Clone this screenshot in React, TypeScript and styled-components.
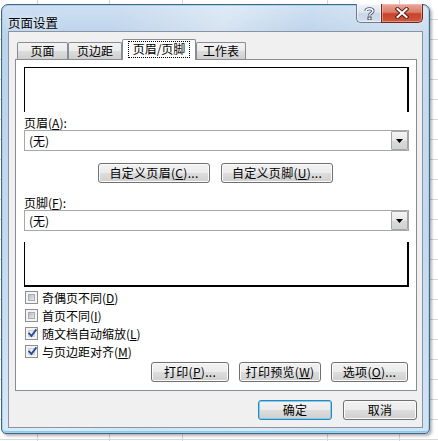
import React from 'react';
import styled, { createGlobalStyle, css } from 'styled-components';

const GlobalStyle = createGlobalStyle`
  html, body { margin: 0; padding: 0; }
  body {
    width: 438px;
    height: 441px;
    overflow: hidden;
    font-family: "Noto Sans CJK SC", "Liberation Sans", sans-serif;
    font-size: 12px;
    color: #000;
    background-color: #fff;
    background-image:
      repeating-linear-gradient(90deg, transparent 0 37px, #d5d8dd 37px 38px, transparent 38px 72.5px),
      repeating-linear-gradient(180deg, transparent 0 19px, #d5d8dd 19px 20px);
  }
`;

const Window = styled.div`
  box-sizing: border-box;
  margin: 4px 0 0 1px;
  width: 429px;
  height: 430px;
  display: flex;
  flex-direction: column;
  padding: 0 6px 5px 6px;
  border: 1px solid #4f6079;
  border-radius: 7px 7px 5px 5px;
  background:
    linear-gradient(112deg, transparent 20%, rgba(255,255,255,0.35) 38%, transparent 52%, rgba(255,255,255,0.25) 70%, transparent 85%),
    linear-gradient(180deg, #cfe0f2 0%, #bdd3ea 7%, #c6daef 55%, #d2e3f4 100%);
  box-shadow: inset 0 0 0 1px #9ad6f6, inset 0 -2px 0 #7fcdf3, 2px 2px 3px rgba(0, 0, 0, 0.3);
`;

const TitleBar = styled.div`
  height: 26px;
  display: flex;
  align-items: flex-start;
`;

const Title = styled.div`
  margin-top: 10px;
  font-size: 12.5px;
  line-height: 15px;
  color: #000;
  text-shadow: 0 0 6px rgba(255, 255, 255, 0.9);
`;

const CaptionButtons = styled.div`
  margin-left: auto;
  margin-top: -1px;
  display: flex;
`;

const CaptionButton = styled.div<{ $close?: boolean }>`
  box-sizing: border-box;
  height: 19px;
  width: ${(p) => (p.$close ? '42px' : '25px')};
  display: flex;
  align-items: center;
  justify-content: center;
  border: 1px solid ${(p) => (p.$close ? '#6a2a22' : '#6e7a8a')};
  border-top: none;
  ${(p) =>
    p.$close
      ? css`
          border-radius: 0 0 5px 0;
          background: linear-gradient(180deg, #e9a99b 0%, #dc7d6a 45%, #c6432b 55%, #cf5a3d 100%);
          box-shadow: inset 0 0 0 1px rgba(255, 200, 190, 0.5);
        `
      : css`
          border-right: none;
          border-radius: 0 0 0 5px;
          background: linear-gradient(180deg, #eef3f9 0%, #dde6f1 45%, #c9d6e6 55%, #d3dfee 100%);
          box-shadow: inset 0 0 0 1px rgba(255, 255, 255, 0.6);
        `}
`;

const Client = styled.div`
  box-sizing: border-box;
  width: 415px;
  height: 397px;
  border: 1px solid #8a93a1;
  background: #f0f0f0;
  padding: 7px 5px 0 6px;
  display: flex;
  flex-direction: column;
`;

const TabStrip = styled.div`
  height: 20px;
  padding-left: 2px;
  display: flex;
  align-items: flex-end;
`;

const Tab = styled.div<{ $w: number; $active?: boolean }>`
  box-sizing: border-box;
  width: ${(p) => p.$w}px;
  display: flex;
  justify-content: center;
  border: 1px solid #898c95;
  border-bottom: none;
  border-radius: 2px 2px 0 0;
  ${(p) =>
    p.$active
      ? css`
          height: 21px;
          margin-bottom: -1px;
          position: relative;
          z-index: 1;
          background: #fff;
          padding-top: 2px;
        `
      : css`
          height: 17px;
          background: linear-gradient(180deg, #f3f3f3 0%, #ebebeb 50%, #dddddd 51%, #cfcfcf 100%);
          padding-top: 1px;
        `}
`;

const TabText = styled.span<{ $focus?: boolean }>`
  line-height: 14px;
  height: 14px;
  padding: 0 2px;
  ${(p) =>
    p.$focus &&
    css`
      outline: 1px dotted #000;
      outline-offset: 0;
      padding: 0 4px;
      height: 15px;
    `}
`;

const Panel = styled.div`
  box-sizing: border-box;
  width: 402px;
  height: 332px;
  border: 1px solid #898c95;
  background: #fff;
  padding: 7px 0 0 8px;
  display: flex;
  flex-direction: column;
`;

const Preview = styled.div<{ $footer?: boolean }>`
  box-sizing: border-box;
  width: 385px;
  height: 45px;
  background: #fff;
  border-left: 1px solid #000;
  border-right: 2px solid #000;
  ${(p) =>
    p.$footer
      ? css`
          margin-top: 11px;
          border-bottom: 2px solid #000;
        `
      : css`
          border-top: 1px solid #000;
        `}
`;

const FieldLabel = styled.div<{ $top: number }>`
  margin-top: ${(p) => p.$top}px;
  height: 15px;
  line-height: 15px;
`;

const Select = styled.div`
  box-sizing: border-box;
  width: 385px;
  height: 21px;
  border: 1px solid #a5a7ab;
  background: #fff;
  display: flex;
`;

const SelectValue = styled.div`
  flex: 1;
  padding-left: 4px;
  line-height: 19px;
`;

const DropButton = styled.div`
  box-sizing: border-box;
  width: 17px;
  height: 19px;
  border: 1px solid #a3a6ab;
  border-radius: 1px;
  background: linear-gradient(180deg, #f4f4f4 0%, #e8e8e8 50%, #dadada 51%, #d2d2d2 100%);
  display: flex;
  align-items: center;
  justify-content: center;
`;

const CustomRow = styled.div`
  margin-top: 12px;
  padding-left: 74px;
  display: flex;
  gap: 11px;
`;

const Button = styled.div<{ $w: number; $default?: boolean }>`
  box-sizing: border-box;
  width: ${(p) => p.$w}px;
  height: 20px;
  display: flex;
  align-items: center;
  justify-content: center;
  line-height: 14px;
  letter-spacing: 0.3px;
  border: 1px solid ${(p) => (p.$default ? '#3c7fb1' : '#707070')};
  border-radius: 3px;
  background: linear-gradient(180deg, #f2f2f2 0%, #ebebeb 50%, #dddddd 51%, #cfcfcf 100%);
  box-shadow: inset 0 0 0 1px ${(p) => (p.$default ? '#6fd4f8' : '#fbfbfb')};
`;

const CheckList = styled.div`
  margin-top: 1px;
  display: flex;
  flex-direction: column;
`;

const CheckRow = styled.div`
  height: 18px;
  padding-left: 1px;
  display: flex;
  align-items: center;
  gap: 4px;
`;

const Box = styled.div<{ $checked?: boolean }>`
  box-sizing: border-box;
  width: 13px;
  height: 13px;
  border: 1px solid #8e8f8f;
  background: #f4f4f4;
  padding: 2px;
  display: flex;
  position: relative;

  &::before {
    content: '';
    flex: 1;
    background: ${(p) =>
      p.$checked
        ? 'linear-gradient(135deg, #e4e4e4 0%, #f7f7f7 100%)'
        : 'linear-gradient(135deg, #b9bcc1 0%, #d6d7d9 60%, #e8e8e8 100%)'};
    border: 1px solid ${(p) => (p.$checked ? '#d0d0d0' : '#a9acb1')};
  }

  svg {
    position: absolute;
    left: 1px;
    top: 0px;
  }
`;

const PrintRow = styled.div`
  margin-top: 2px;
  width: 385px;
  padding-right: 1px;
  box-sizing: border-box;
  display: flex;
  justify-content: flex-end;
  gap: 10px;
`;

const DialogActions = styled.div`
  margin-top: 9px;
  display: flex;
  justify-content: flex-end;
  gap: 11px;
`;

const Acc = ({ k }: { k: string }) => (
  <>
    (<u>{k}</u>)
  </>
);

const Check = ({ label, k, checked }: { label: string; k: string; checked?: boolean }) => (
  <CheckRow>
    <Box $checked={checked}>
      {checked && (
        <svg width="11" height="11" viewBox="0 0 11 11">
          <path d="M2.2 5.6 L4.4 8 L8.8 2.2" fill="none" stroke="#2a4c9c" strokeWidth="1.9" strokeLinecap="square" />
        </svg>
      )}
    </Box>
    <span>
      {label}
      <Acc k={k} />
    </span>
  </CheckRow>
);

const Arrow = () => (
  <svg width="7" height="4" viewBox="0 0 7 4">
    <path d="M0 0 H7 L3.5 4 Z" fill="#000" />
  </svg>
);

export default function App() {
  return (
    <>
      <GlobalStyle />
      <Window>
        <TitleBar>
          <Title>页面设置</Title>
          <CaptionButtons>
            <CaptionButton>
              <svg width="11" height="13" viewBox="0 0 11 13">
                <path d="M2 4 C2 1 9 1 9 4 C9 6 5.5 6 5.5 8.5" fill="none" stroke="#3d4b5e" strokeWidth="3" />
                <path d="M2 4 C2 1 9 1 9 4 C9 6 5.5 6 5.5 8.5" fill="none" stroke="#fff" strokeWidth="1.4" />
                <rect x="4" y="10" width="3" height="3" fill="#fff" stroke="#3d4b5e" strokeWidth="1" />
              </svg>
            </CaptionButton>
            <CaptionButton $close>
              <svg width="14" height="12" viewBox="0 0 14 12">
                <path d="M2.5 2 L11.5 10 M11.5 2 L2.5 10" stroke="#5a1d14" strokeWidth="4" strokeLinecap="square" />
                <path d="M2.5 2 L11.5 10 M11.5 2 L2.5 10" stroke="#fff" strokeWidth="2" strokeLinecap="square" />
              </svg>
            </CaptionButton>
          </CaptionButtons>
        </TitleBar>
        <Client>
          <TabStrip>
            <Tab $w={51}>
              <TabText>页面</TabText>
            </Tab>
            <Tab $w={54}>
              <TabText>页边距</TabText>
            </Tab>
            <Tab $w={74} $active>
              <TabText $focus>页眉/页脚</TabText>
            </Tab>
            <Tab $w={50}>
              <TabText>工作表</TabText>
            </Tab>
          </TabStrip>
          <Panel>
            <Preview />
            <FieldLabel $top={3}>
              页眉<Acc k="A" />:
            </FieldLabel>
            <Select>
              <SelectValue>(无)</SelectValue>
              <DropButton>
                <Arrow />
              </DropButton>
            </Select>
            <CustomRow>
              <Button $w={112}>
                自定义页眉<Acc k="C" />...
              </Button>
              <Button $w={112}>
                自定义页脚<Acc k="U" />...
              </Button>
            </CustomRow>
            <FieldLabel $top={12}>
              页脚<Acc k="F" />:
            </FieldLabel>
            <Select>
              <SelectValue>(无)</SelectValue>
              <DropButton>
                <Arrow />
              </DropButton>
            </Select>
            <Preview $footer />
            <CheckList>
              <Check label="奇偶页不同" k="D" />
              <Check label="首页不同" k="I" />
              <Check label="随文档自动缩放" k="L" checked />
              <Check label="与页边距对齐" k="M" checked />
            </CheckList>
            <PrintRow>
              <Button $w={78}>
                打印<Acc k="P" />...
              </Button>
              <Button $w={82}>
                打印预览<Acc k="W" />
              </Button>
              <Button $w={77}>
                选项<Acc k="O" />...
              </Button>
            </PrintRow>
          </Panel>
          <DialogActions>
            <Button $w={74} $default>
              确定
            </Button>
            <Button $w={74}>取消</Button>
          </DialogActions>
        </Client>
      </Window>
    </>
  );
}
